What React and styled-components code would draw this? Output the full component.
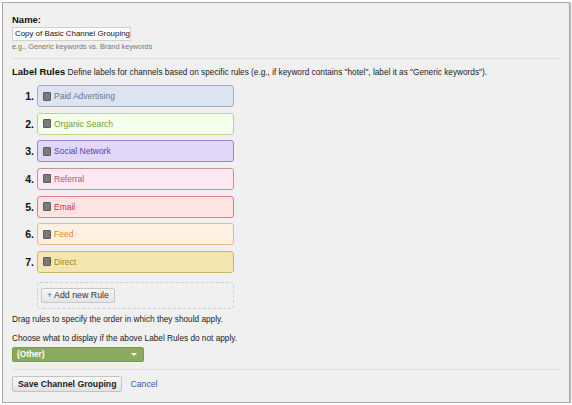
import React from 'react';
import styled, { createGlobalStyle } from 'styled-components';

const GlobalStyle = createGlobalStyle`
  body {
    margin: 0;
    background: #ffffff;
    font-family: "Liberation Sans", Arial, sans-serif;
  }
`;

const Page = styled.div`
  padding: 2px 0 0 2px;
`;

const Panel = styled.div`
  box-sizing: border-box;
  width: 568px;
  height: 401px;
  background: #f0f0f0;
  border: 1px solid #a8a8a8;
  box-shadow: 1px 1px 1px rgba(0, 0, 0, 0.25);
  padding: 10.5px 9px 0 9px;
  font-size: 8.25px;
  color: #222;
`;

const FieldLabel = styled.div`
  font-weight: bold;
  font-size: 9.5px;
  line-height: 11px;
  color: #111;
`;

const NameInput = styled.div`
  box-sizing: border-box;
  margin-top: 2.5px;
  width: 119px;
  height: 14px;
  background: #fff;
  border: 1px solid #d0d0d0;
  padding: 0 2px;
  font-size: 7.9px;
  line-height: 12px;
  color: #111;
  white-space: nowrap;
  overflow: hidden;
`;

const Hint = styled.div`
  margin-top: 1px;
  font-size: 7.3px;
  line-height: 9px;
  color: #777;
`;

const Divider = styled.div`
  height: 1px;
  background: #dcdcdc;
  margin-top: ${p => p.$top};
  width: 549px;
`;

const Intro = styled.div`
  margin-top: 8px;
  font-size: 8.25px;
  line-height: 10px;
  color: #222;
  white-space: nowrap;

  b {
    font-size: 9.5px;
    color: #111;
  }
`;

const RuleList = styled.div`
  display: flex;
  flex-direction: column;
  gap: 5.67px;
  margin-top: 7px;
`;

const RuleRow = styled.div`
  display: flex;
  align-items: center;
`;

const RuleNumber = styled.div`
  width: 25px;
  padding-right: 3px;
  box-sizing: border-box;
  text-align: right;
  font-weight: bold;
  font-size: 10.5px;
  color: #111;
`;

const RuleBox = styled.div`
  box-sizing: border-box;
  width: 197px;
  height: 22px;
  display: flex;
  align-items: center;
  gap: 3px;
  padding-left: 5px;
  border-radius: 3px;
  border: 1px solid ${p => p.$border};
  background: ${p => p.$bg};
  color: ${p => p.$text};
  font-size: 8.5px;
`;

const Handle = styled.span`
  display: inline-block;
  width: 6px;
  height: 7px;
  background: #7a7a7a;
  border: 1px solid #5c5c5c;
  border-radius: 1px;
`;

const AddArea = styled.div`
  box-sizing: border-box;
  margin: 9px 0 0 25px;
  width: 197px;
  height: 27px;
  border: 1px dashed #cfcfcf;
  border-radius: 3px;
  padding: 5px 0 0 3px;
`;

const SmallButton = styled.div`
  box-sizing: border-box;
  display: inline-block;
  height: 15px;
  padding: 0 5px;
  line-height: 13px;
  border: 1px solid #c8c8c8;
  border-radius: 2px;
  background: linear-gradient(#f8f8f8, #e4e4e4);
  font-size: 8.8px;
  color: #333;

  span {
    color: #3a6ab0;
  }
`;

const Note = styled.div`
  margin-top: ${p => p.$top};
  font-size: 8.25px;
  line-height: 10px;
  color: #222;
`;

const Select = styled.div`
  box-sizing: border-box;
  margin-top: 3.5px;
  width: 132px;
  height: 14.5px;
  display: flex;
  align-items: center;
  justify-content: space-between;
  padding: 0 6px 0 4px;
  background: #8caa5e;
  border: 1px solid #7d9a52;
  border-radius: 2px;
  color: #fff;
  font-weight: bold;
  font-size: 8.25px;
`;

const Caret = styled.span`
  width: 0;
  height: 0;
  border-left: 3px solid transparent;
  border-right: 3px solid transparent;
  border-top: 3px solid #fff;
`;

const Actions = styled.div`
  display: flex;
  align-items: center;
  gap: 8px;
  margin-top: 6.5px;
`;

const SaveButton = styled.div`
  box-sizing: border-box;
  height: 16px;
  padding: 0 5px;
  line-height: 14px;
  border: 1px solid #c4c4c4;
  border-radius: 2px;
  background: linear-gradient(#fafafa, #e2e2e2);
  font-weight: bold;
  font-size: 8.7px;
  color: #222;
`;

const CancelLink = styled.span`
  color: #2f5fae;
  font-size: 8.7px;
`;

const rules = [
  { label: 'Paid Advertising', bg: '#dde4f1', border: '#a8b0c8', text: '#6b7394' },
  { label: 'Organic Search', bg: '#f6ffec', border: '#b6d690', text: '#66a23a' },
  { label: 'Social Network', bg: '#e1d7f8', border: '#9b80d8', text: '#5b3da8' },
  { label: 'Referral', bg: '#fde9f1', border: '#c48ea4', text: '#a05b79' },
  { label: 'Email', bg: '#fee3e3', border: '#e27c84', text: '#d2303d' },
  { label: 'Feed', bg: '#fff1e2', border: '#f2b482', text: '#f1802c' },
  { label: 'Direct', bg: '#f3e7b1', border: '#cfb664', text: '#a08a20' }
];

const App = () => {
  return (
    <Page>
      <GlobalStyle />
      <Panel>
        <FieldLabel>Name:</FieldLabel>
        <NameInput>Copy of Basic Channel Grouping</NameInput>
        <Hint>e.g., Generic keywords vs. Brand keywords</Hint>
        <Divider $top="7px" />

        <Intro>
          <b>Label Rules</b> Define labels for channels based on specific rules (e.g., if keyword contains "hotel", label it as "Generic keywords").
        </Intro>

        <RuleList>
          {rules.map((rule, index) => (
            <RuleRow key={rule.label}>
              <RuleNumber>{index + 1}.</RuleNumber>
              <RuleBox $bg={rule.bg} $border={rule.border} $text={rule.text}>
                <Handle />
                {rule.label}
              </RuleBox>
            </RuleRow>
          ))}
        </RuleList>

        <AddArea>
          <SmallButton><span>+</span> Add new Rule</SmallButton>
        </AddArea>

        <Note $top="6.5px">Drag rules to specify the order in which they should apply.</Note>
        <Note $top="8.5px">Choose what to display if the above Label Rules do not apply.</Note>
        <Select>
          (Other)
          <Caret />
        </Select>
        <Divider $top="7px" />

        <Actions>
          <SaveButton>Save Channel Grouping</SaveButton>
          <CancelLink>Cancel</CancelLink>
        </Actions>
      </Panel>
    </Page>
  );
};

export default App;
